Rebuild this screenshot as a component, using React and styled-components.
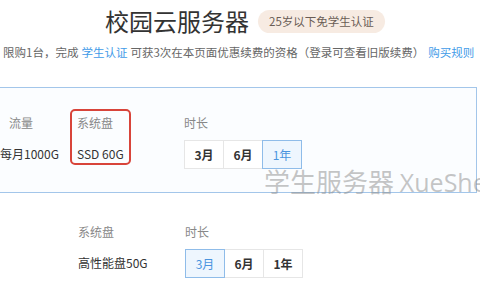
import React from "react";
import styled, { createGlobalStyle } from "styled-components";

const Global = createGlobalStyle`
  html, body { margin: 0; padding: 0; background: #fff; overflow: hidden; }
  body { width: 480px; height: 300px; font-family: "Noto Sans CJK SC", "Noto Sans", sans-serif; }
`;

const Page = styled.div`
  position: relative;
  width: 480px;
  height: 300px;
  overflow: hidden;
`;

const Header = styled.div`
  display: flex;
  justify-content: center;
  align-items: center;
  gap: 9px;
  padding: 5px 0 0 10px;
  height: 32px;
`;

const Title = styled.h1`
  margin: 0;
  font-size: 24px;
  line-height: 32px;
  font-weight: 400;
  color: #333;
`;

const Badge = styled.span`
  display: inline-flex;
  align-items: center;
  height: 23px;
  padding: 0 11px;
  border-radius: 12px;
  background: #f7ebe2;
  color: #6a5d55;
  font-size: 11.5px;
`;

const Notice = styled.p`
  margin: 7px 0 0;
  padding-left: 3px;
  font-size: 11.5px;
  line-height: 17px;
  color: #666;
  white-space: nowrap;
`;

const Link = styled.span`
  color: #3f9be8;
  margin: 0 ${(p) => p.$gap || 3}px;
`;

const Card = styled.div`
  margin: ${(p) => (p.$active ? "26px" : "3px")} 3px 0 -20px;
  padding: ${(p) => (p.$active ? "26px 0 23px 19px" : "26px 0 20px 20px")};
  border: 1px solid ${(p) => (p.$active ? "#a3c6ea" : "transparent")};
  background: ${(p) => (p.$active ? "#fbfdff" : "#fff")};
`;

const SpecRow = styled.div`
  display: grid;
  grid-template-columns: 77px 107px auto;
  align-items: start;
`;

const Col = styled.div`
  display: flex;
  flex-direction: column;
  gap: ${(p) => (p.$gap ? p.$gap : 14)}px;
  ${(p) =>
    p.$highlight &&
    `
    border: 2px solid #d8443a;
    border-radius: 5px;
    padding: 3px 5px 1px;
    margin: -5px 0 -3px -7px;
    justify-self: start;
  `}
`;

const Label = styled.span`
  font-size: 12px;
  line-height: 17px;
  color: #888;
  padding-left: ${(p) => p.$indent || 0}px;
`;

const Value = styled.span`
  font-size: 12px;
  line-height: 17px;
  color: #333;
  white-space: nowrap;
`;

const Durations = styled.div`
  display: flex;
`;

const DurBtn = styled.button`
  width: 40px;
  height: 29px;
  margin: 0;
  margin-left: ${(p) => (p.$first ? 0 : -1)}px;
  padding: 0;
  position: relative;
  z-index: ${(p) => (p.$on ? 1 : 0)};
  border: 1px solid ${(p) => (p.$on ? "#8fbce9" : "#e6e6e6")};
  background: ${(p) => (p.$on ? "#eef6fe" : "#fff")};
  color: ${(p) => (p.$on ? "#4a94de" : "#333")};
  font-family: inherit;
  font-size: 12px;
  font-weight: ${(p) => (p.$on ? 400 : 600)};
`;

const Watermark = styled.div`
  position: absolute;
  left: 264px;
  top: 165px;
  font-size: 26px;
  line-height: 32px;
  color: rgba(140, 140, 140, 0.5);
  white-space: nowrap;
  pointer-events: none;
`;

const Latin = styled.span`
  font-family: "Open Sans", "Noto Sans", sans-serif;
  font-size: 25px;
`;

function DurationPicker({ selected }) {
  const opts = ["3月", "6月", "1年"];
  return (
    <Durations>
      {opts.map((o, i) => (
        <DurBtn key={o} $first={i === 0} $on={o === selected}>
          {o}
        </DurBtn>
      ))}
    </Durations>
  );
}

export default function App() {
  return (
    <>
      <Global />
      <Page>
        <Header>
          <Title>校园云服务器</Title>
          <Badge>25岁以下免学生认证</Badge>
        </Header>
        <Notice>
          限购1台，完成<Link>学生认证</Link>可获3次在本页面优惠续费的资格（登录可查看旧版续费）
          <Link $gap={4}>购买规则</Link>
        </Notice>

        <Card $active>
          <SpecRow>
            <Col>
              <Label $indent={9}>流量</Label>
              <Value>每月1000G</Value>
            </Col>
            <Col $highlight>
              <Label>系统盘</Label>
              <Value>SSD 60G</Value>
            </Col>
            <Col $gap={9}>
              <Label>时长</Label>
              <DurationPicker selected="1年" />
            </Col>
          </SpecRow>
        </Card>

        <Card>
          <SpecRow>
            <Col />
            <Col>
              <Label>系统盘</Label>
              <Value>高性能盘50G</Value>
            </Col>
            <Col $gap={9}>
              <Label>时长</Label>
              <DurationPicker selected="3月" />
            </Col>
          </SpecRow>
        </Card>

        <Watermark>
          学生服务器 <Latin>XueShen</Latin>
        </Watermark>
      </Page>
    </>
  );
}
